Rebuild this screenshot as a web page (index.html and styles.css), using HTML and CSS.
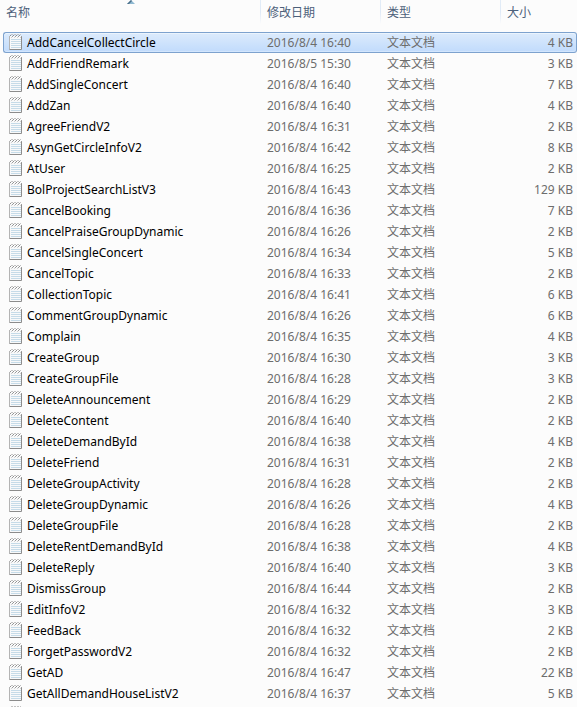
FILE: index.html
```html
<!DOCTYPE html>
<html lang="zh-CN">
<head>
<meta charset="utf-8">
<title>文件列表</title>
<link rel="stylesheet" href="styles.css">
</head>
<body>
<svg class="defs" aria-hidden="true">
  <symbol id="note" viewBox="0 0 14 16">
    <path d="M1 2H13V15H1Z" fill="#f8f9fa"/>
    <path d="M.5 2V15.500" fill="none" stroke="#b4b4b4"/>
    <path d="M12.500 3V15.500H.5" fill="none" stroke="#8c8c8c"/>
    <path d="M2 5.500H12M2 7.500H12M2 9.500H12M2 11.500H12M2 13.500H12" stroke="#c6dbe8"/>
    <path d="M1 1.500H2M4 1.500H5M7 1.500H8M10 1.500H11" stroke="#8f8f8f"/>
    <path d="M2 .5H4M5 .5H7M8 .5H10M11 .5H12" stroke="#c4c4c4"/>
    <path d="M3 2.500H4M6 2.500H7M9 2.500H10M12 2.500H13" stroke="#9c9c9c"/>
    <path d="M2 3.500H3M5 3.500H6M8 3.500H9M11 3.500H12" stroke="#d2d2d2"/>
  </symbol>
</svg>
<table class="files">
  <colgroup><col><col class="col-date"><col class="col-type"><col class="col-size"></colgroup>
  <thead>
    <tr>
      <th aria-sort="ascending"><button type="button">名称</button><svg class="sort" viewBox="0 0 8 4" aria-hidden="true"><path d="M0 4L4 0L8 4Z" fill="#8fb9d2"/><path d="M0 4L4 0L5 1L2 4Z" fill="#4b6f88"/></svg></th>
      <th><button type="button">修改日期</button></th>
      <th><button type="button">类型</button></th>
      <th><button type="button">大小</button></th>
    </tr>
  </thead>
  <tbody id="rows"></tbody>
</table>
<script src="files.js"></script>
</body>
</html>
```
FILE: styles.css
```css
* {
  box-sizing: border-box;
}

body {
  margin: 0;
  height: 100vh;
  overflow: hidden;
  padding-left: 3px;
  background: #fcfcfc;
  color: #6d6d6d;
  font: 12px/19px "Noto Sans", "Noto Sans CJK SC", sans-serif;
}

.defs {
  position: absolute;
  width: 0;
  height: 0;
}

.files {
  width: 100%;
  table-layout: fixed;
  border-collapse: separate;
  border-spacing: 0;
}

.col-date,
.col-type {
  width: 120px;
}

.col-size {
  width: 77px;
}

th {
  position: relative;
  height: 32px;
  padding: 3px 0 0 7px;
  text-align: left;
  vertical-align: top;
  background: linear-gradient(#e2ecf7, #dfeaf7 50%, #fcfcfc) left top / 1px 24px no-repeat;
}

th:first-child {
  padding-left: 3px;
  background: none;
}

th button {
  padding: 0;
  border: 0;
  background: none;
  color: #4c607a;
  font: inherit;
  font-weight: 400;
}

.sort {
  position: absolute;
  top: 0;
  left: 50%;
  width: 8px;
  height: 4px;
  margin-left: -5px;
}

td {
  height: 21px;
  padding: 0 0 0 7px;
  border: solid transparent;
  border-width: 1px 0;
  white-space: nowrap;
}

td:first-child {
  padding-left: 5px;
  border-left-width: 1px;
}

td:last-child {
  padding-right: 3px;
  border-right-width: 1px;
  text-align: right;
}

.name {
  display: flex;
  align-items: flex-start;
  height: 19px;
  gap: 4px;
  color: #000;
}

.name svg {
  width: 14px;
  height: 16px;
  margin-top: 1px;
  flex: none;
}

.selected td {
  border-color: #7da2ce;
  background: linear-gradient(#dcebfc, #c1dbfc) padding-box;
  box-shadow: inset 0 1px #ebf4fd, inset 0 -1px #d3e6fd;
}

.selected td:first-child {
  border-radius: 3px 0 0 3px;
}

.selected td:last-child {
  border-radius: 0 3px 3px 0;
}
```
FILE: files.js
```js
// name | day of August 2016 and time | size in KB
const files = `AddCancelCollectCircle|4 16:40|4
AddFriendRemark|5 15:30|3
AddSingleConcert|4 16:40|7
AddZan|4 16:40|4
AgreeFriendV2|4 16:31|2
AsynGetCircleInfoV2|4 16:42|8
AtUser|4 16:25|2
BolProjectSearchListV3|4 16:43|129
CancelBooking|4 16:36|7
CancelPraiseGroupDynamic|4 16:26|2
CancelSingleConcert|4 16:34|5
CancelTopic|4 16:33|2
CollectionTopic|4 16:41|6
CommentGroupDynamic|4 16:26|6
Complain|4 16:35|4
CreateGroup|4 16:30|3
CreateGroupFile|4 16:28|3
DeleteAnnouncement|4 16:29|2
DeleteContent|4 16:40|2
DeleteDemandById|4 16:38|4
DeleteFriend|4 16:31|2
DeleteGroupActivity|4 16:28|2
DeleteGroupDynamic|4 16:26|4
DeleteGroupFile|4 16:28|2
DeleteRentDemandById|4 16:38|4
DeleteReply|4 16:40|3
DismissGroup|4 16:44|2
EditInfoV2|4 16:32|3
FeedBack|4 16:32|2
ForgetPasswordV2|4 16:32|2
GetAD|4 16:47|22
GetAllDemandHouseListV2|4 16:37|5`.split("\n").map(line => line.split("|"));

const icon = '<svg aria-hidden="true"><use href="#note"/></svg>';
const rows = files.map(([name, time, size], i) =>
  `<tr${i === 0 ? ' class="selected"' : ""}><td><div class="name">${icon}<span>${name}</span></div></td><td>2016/8/${time}</td><td>文本文档</td><td>${size} KB</td></tr>`);
rows.push(`<tr><td><div class="name">${icon}</div></td><td></td><td></td><td></td></tr>`);
document.getElementById("rows").innerHTML = rows.join("");
```
